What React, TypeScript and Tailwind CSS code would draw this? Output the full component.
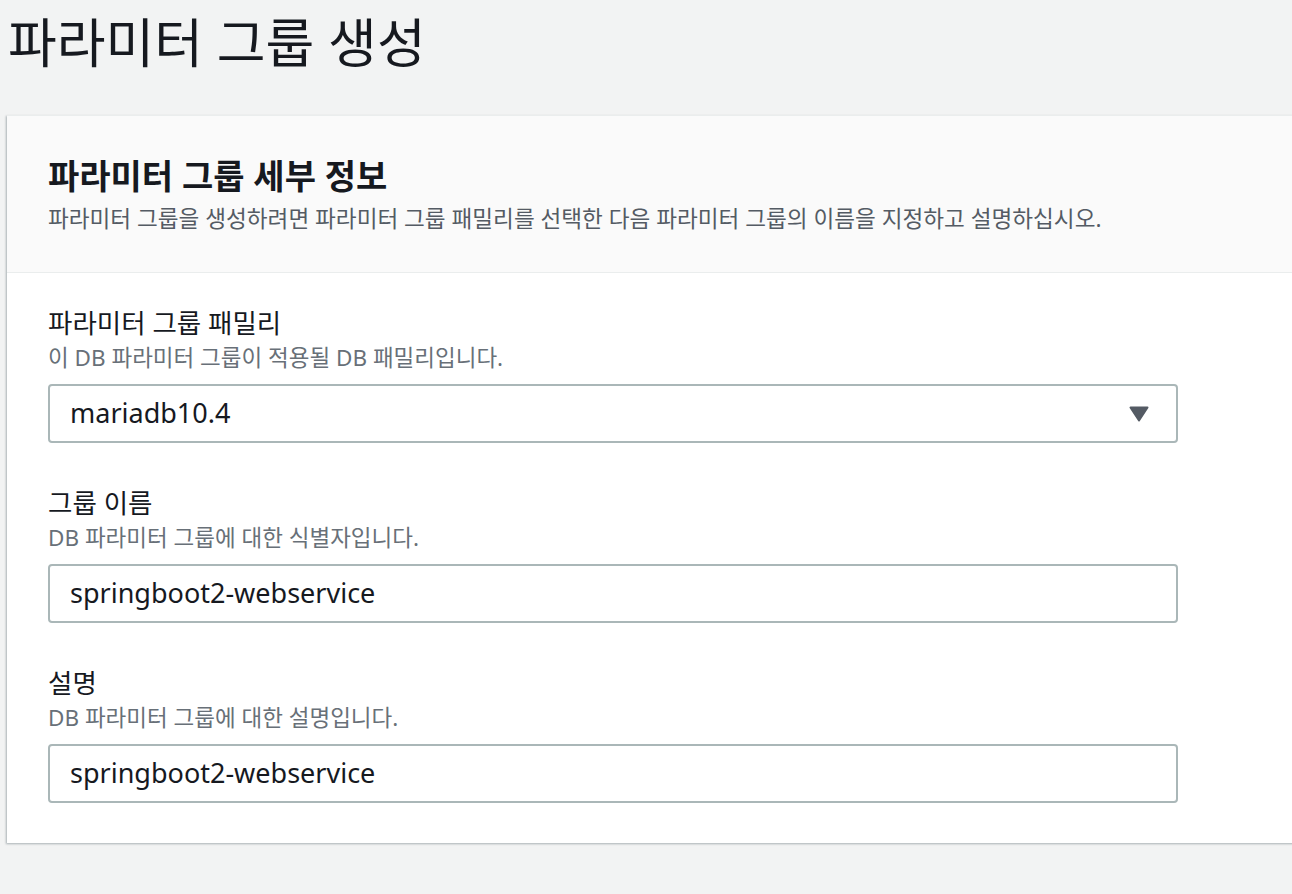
import { type ReactNode } from 'react';

const font = { fontFamily: '"Noto Sans", "Noto Sans CJK KR", sans-serif' };

function Field({ label, hint, children }: { label: string; hint: string; children: ReactNode }) {
  return (
    <div className="flex flex-col">
      <p className="text-[26.5px] leading-[36px] text-[#16191f]">{label}</p>
      <p className="text-[22.5px] leading-[28px] text-[#687078] mt-[3px]">{hint}</p>
      <div className="mt-[12px]">{children}</div>
    </div>
  );
}

function TextBox({ value, select }: { value: string; select?: boolean }) {
  return (
    <div className="flex items-center justify-between w-[1130px] h-[59px] border-2 border-[#aab7b8] rounded-[4px] bg-white pl-[20px] pr-[27px]">
      <span className="text-[27px] text-[#16191f]">{value}</span>
      {select && (
        <svg width="20" height="16" viewBox="0 0 20 16">
          <path d="M1.5 1.5h17L10 14.5z" fill="#545b64" stroke="#545b64" strokeWidth="2" strokeLinejoin="round" />
        </svg>
      )}
    </div>
  );
}

export default function App() {
  return (
    <div className="w-[1292px] h-[894px] overflow-hidden bg-[#f2f3f3]" style={font}>
      <h1 className="pl-[8px] pt-[8px] text-[53px] leading-[70px] text-[#16191f]">파라미터 그룹 생성</h1>
      <div className="ml-[7px] mt-[37px] w-[1320px] bg-white border-t border-[#eaeded] shadow-[-1px_1px_2px_rgba(0,28,36,0.3)]">
        <div className="bg-[#fafafa] border-b border-[#eaeded] pl-[41px] pt-[38px] pb-[38px]">
          <h2 className="text-[34px] leading-[44px] font-bold text-[#16191f]">파라미터 그룹 세부 정보</h2>
          <p className="text-[22.6px] leading-[30px] text-[#545b64] mt-[6px]">
            파라미터 그룹을 생성하려면 파라미터 그룹 패밀리를 선택한 다음 파라미터 그룹의 이름을 지정하고 설명하십시오.
          </p>
        </div>
        <div className="pl-[41px] pt-[32px] pb-[40px] flex flex-col gap-[42px]">
          <Field label="파라미터 그룹 패밀리" hint="이 DB 파라미터 그룹이 적용될 DB 패밀리입니다.">
            <TextBox value="mariadb10.4" select />
          </Field>
          <Field label="그룹 이름" hint="DB 파라미터 그룹에 대한 식별자입니다.">
            <TextBox value="springboot2-webservice" />
          </Field>
          <Field label="설명" hint="DB 파라미터 그룹에 대한 설명입니다.">
            <TextBox value="springboot2-webservice" />
          </Field>
        </div>
      </div>
    </div>
  );
}
